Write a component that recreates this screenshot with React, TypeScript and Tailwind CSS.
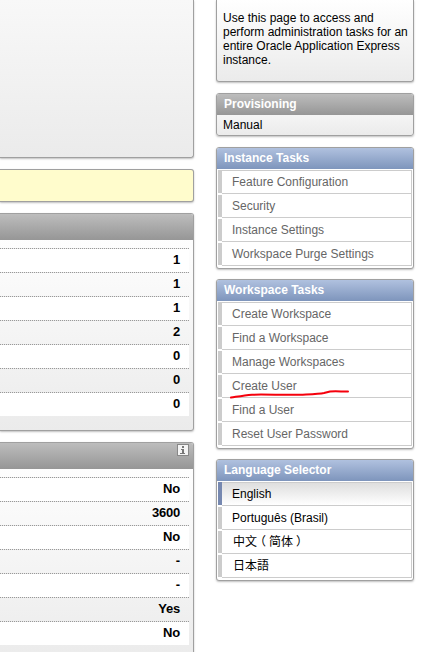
import React from 'react';

const frame =
  'rounded-[3px] border border-[#a0a0a0] shadow-[0_1px_2px_rgba(0,0,0,0.25)] overflow-hidden';

function StatRows({ values }: { values: string[] }) {
  return (
    <ul className="mr-1 mt-2">
      {values.map((v, i) => (
        <li
          key={i}
          className={`relative h-6 pr-[9px] text-right text-[13px] font-bold leading-6 tracking-[-0.2px] text-black ${
            i % 2 === 0 ? 'bg-white' : ''
          }`}
        >
          <span
            className="absolute left-0 right-0 top-0 h-px bg-[repeating-linear-gradient(90deg,#999_0,#999_1px,#e8e8e8_1px,#e8e8e8_2px)]"
          />
          {v}
        </li>
      ))}
    </ul>
  );
}

function StatPanel({ values, info }: { values: string[]; info?: boolean }) {
  return (
    <section
      className={`${frame} h-[218px] rounded-l-none border-l-0 bg-[linear-gradient(#fff_0,#fdfdfd_35px,#ebebeb_100%)]`}
    >
      <header className="flex h-[26px] justify-end bg-linear-to-b from-[#bdbdbd] to-[#969696] pr-1 pt-px">
        {info && (
          <svg width="12" height="12" viewBox="0 0 12 12" shapeRendering="crispEdges">
            <rect width="12" height="12" fill="#888" />
            <rect x="1" y="1" width="10" height="10" fill="#f4f4f4" />
            <path d="M5 2h2v2H5zM4 5h3v4h1v1H3V9h2V6H4z" fill="#777" />
          </svg>
        )}
      </header>
      <StatRows values={values} />
    </section>
  );
}

function ListPanel({
  title,
  items,
  language,
}: {
  title: string;
  items: React.ReactNode[];
  language?: boolean;
}) {
  return (
    <section className={`${frame} bg-white pb-[2px]`}>
      <header className="h-[21px] bg-linear-to-b from-[#b0c1df] to-[#7e95bc] pl-[7px] text-[12px] font-bold leading-[21px] text-white">
        {title}
      </header>
      <ul className="ml-px mr-px mt-px border-r border-[#ccc]">
        {items.map((item, i) => {
          const current = language && i === 0;
          return (
            <li key={i} className="flex h-6">
              <span
                className={`w-1 shrink-0 ${i === 0 ? 'h-[23px]' : 'mt-px h-[22px]'} ${
                  current ? 'bg-[#7688b0]' : 'bg-[#ccc]'
                }`}
              />
              <span
                className={`flex-1 border-b border-[#ccc] pl-[10px] text-[12px] whitespace-nowrap ${
                  i === 0 ? 'border-t leading-[22px]' : 'leading-6'
                } ${language ? 'text-black' : 'text-[#666]'} ${
                  current ? 'bg-linear-to-b from-[#dedede] to-white' : ''
                }`}
              >
                {item}
              </span>
            </li>
          );
        })}
      </ul>
    </section>
  );
}

export default function App() {
  return (
    <main className="relative flex h-[652px] w-[423px] gap-[22px] overflow-hidden bg-white font-['Liberation_Sans','Noto_Sans_CJK_SC',sans-serif]">
      <div className="flex w-[194px] shrink-0 flex-col gap-[11px]">
        <section
          className={`${frame} h-[158px] shrink-0 rounded-t-none rounded-l-none border-l-0 border-t-0 bg-linear-to-b from-[#f8f8f8] to-[#ebebeb]`}
        />
        <section
          className={`${frame} h-[33px] shrink-0 rounded-l-none border-l-0 bg-[#fffccc]`}
        />
        <div className="shrink-0">
          <StatPanel values={['1', '1', '1', '2', '0', '0', '0']} />
        </div>
        <div className="shrink-0">
          <StatPanel info values={['No', '3600', 'No', '-', '-', 'Yes', 'No']} />
        </div>
      </div>

      <aside className="flex w-[198px] shrink-0 flex-col gap-[10px]">
        <section
          className={`${frame} mb-px h-[82px] shrink-0 rounded-t-none border-t-0 bg-linear-to-b from-white to-[#ebebeb] pl-[6px] pt-[11px] text-[12px] leading-[14px] text-black`}
        >
          Use this page to access and
          <br />
          perform administration tasks for an
          <br />
          entire Oracle Application Express
          <br />
          instance.
        </section>
        <section
          className={`${frame} mb-px h-[43px] shrink-0 bg-linear-to-b from-white to-[#ebebeb]`}
        >
          <header className="h-[21px] bg-linear-to-b from-[#bdbdbd] to-[#969696] pl-[7px] text-[12px] font-bold leading-[21px] text-white">
            Provisioning
          </header>
          <p className="pl-[6px] text-[12px] leading-[21px] text-black">Manual</p>
        </section>
        <ListPanel
          title="Instance Tasks"
          items={[
            'Feature Configuration',
            'Security',
            'Instance Settings',
            'Workspace Purge Settings',
          ]}
        />
        <ListPanel
          title="Workspace Tasks"
          items={[
            'Create Workspace',
            'Find a Workspace',
            'Manage Workspaces',
            'Create User',
            'Find a User',
            'Reset User Password',
          ]}
        />
        <ListPanel
          language
          title="Language Selector"
          items={[
            'English',
            'Português (Brasil)',
            <span lang="zh-CN" className="pl-px">
              中文
              <span className="mx-[3px] [font-feature-settings:'halt']">（</span>
              简体
              <span className="ml-[3px] [font-feature-settings:'halt']">）</span>
            </span>,
            <span lang="ja" className="pl-px">
              日本語
            </span>,
          ]}
        />
      </aside>

      {/* Hand-drawn underline below "Create User" */}
      <svg
        className="pointer-events-none absolute left-[228px] top-[386px]"
        width="124"
        height="16"
        viewBox="0 0 124 16"
        fill="none"
      >
        <path
          d="M3 11.500C10 10.500 16 9.500 24 8.700C40 8.300 62 9.300 78 8.500C88 8 92 7.800 96 7L102 5.500C108 5 114 5.600 120 5.500"
          stroke="#f5000c"
          strokeWidth="2"
          strokeLinecap="round"
        />
      </svg>
    </main>
  );
}
